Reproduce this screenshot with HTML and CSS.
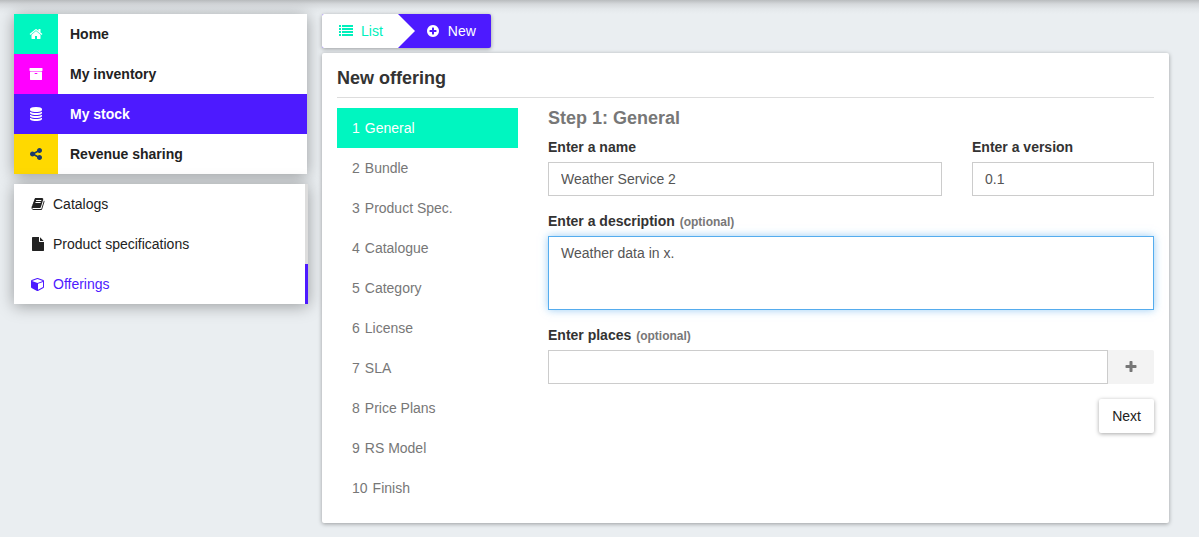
FILE: index.html
```html
<!DOCTYPE html>
<html lang="en">
<head>
<meta charset="utf-8">
<meta name="viewport" content="width=device-width, initial-scale=1">
<title>New offering</title>
<link rel="stylesheet" href="styles.css">
</head>
<body>
<div class="page">
  <aside class="sidebar">
    <nav class="menu" aria-label="Main">
      <a class="menu-item" href="#home"><span class="menu-icon teal"><svg class="icon" viewBox="0 0 1792 1792"><path d="M1472 992v480q0 26-19 45t-45 19h-384v-384h-256v384h-384q-26 0-45-19t-19-45v-480q0-1 .5-3t.5-3l575-474 575 474q1 2 1 6zm223-69l-62 74q-8 9-21 11h-3q-13 0-21-7l-692-577-692 577q-12 8-24 7-13-2-21-11l-62-74q-8-10-7-23.5t11-21.5l719-599q32-26 76-26t76 26l244 204v-195q0-14 9-23t23-9h192q14 0 23 9t9 23v408l219 182q10 8 11 21.5t-7 23.5z"/></svg></span><span class="menu-label">Home</span></a>
      <a class="menu-item" href="#inventory"><span class="menu-icon magenta"><svg class="icon" viewBox="0 0 1792 1792"><path d="M1088 832q0-26-19-45t-45-19h-256q-26 0-45 19t-19 45 19 45 45 19h256q26 0 45-19t19-45zm576-192v960q0 26-19 45t-45 19h-1408q-26 0-45-19t-19-45v-960q0-26 19-45t45-19h1408q26 0 45 19t19 45zm64-448v256q0 26-19 45t-45 19h-1536q-26 0-45-19t-19-45v-256q0-26 19-45t45-19h1536q26 0 45 19t19 45z"/></svg></span><span class="menu-label">My inventory</span></a>
      <a class="menu-item selected" href="#stock" aria-current="page"><span class="menu-icon"><svg class="icon" viewBox="0 0 1792 1792"><path d="M896 768q237 0 443-43t325-127v170q0 69-103 128t-280 93.500-385 34.500-385-34.500-280-93.500-103-128v-170q119 84 325 127t443 43zm0 768q237 0 443-43t325-127v170q0 69-103 128t-280 93.500-385 34.500-385-34.500-280-93.500-103-128v-170q119 84 325 127t443 43zm0-384q237 0 443-43t325-127v170q0 69-103 128t-280 93.500-385 34.500-385-34.500-280-93.500-103-128v-170q119 84 325 127t443 43zm0-1152q208 0 385 34.500t280 93.500 103 128v128q0 69-103 128t-280 93.500-385 34.500-385-34.500-280-93.500-103-128v-128q0-69 103-128t280-93.500 385-34.500z"/></svg></span><span class="menu-label">My stock</span></a>
      <a class="menu-item" href="#revenue"><span class="menu-icon yellow"><svg class="icon" viewBox="0 0 1792 1792"><path d="M1344 1024q133 0 226.500 93.500t93.500 226.500-93.500 226.500-226.500 93.500-226.500-93.500-93.500-226.500q0-12 2-34l-360-180q-92 86-218 86-133 0-226.500-93.500t-93.500-226.500 93.500-226.500 226.500-93.500q126 0 218 86l360-180q-2-22-2-34 0-133 93.500-226.500t226.500-93.500 226.500 93.500 93.500 226.500-93.500 226.500-226.500 93.500q-126 0-218-86l-360 180q2 22 2 34t-2 34l360 180q92-86 218-86z"/></svg></span><span class="menu-label">Revenue sharing</span></a>
    </nav>
    <nav class="submenu" aria-label="My stock">
      <a class="submenu-item" href="#catalogs"><svg class="icon" viewBox="0 0 1792 1792"><path d="M1703 478q40 57 18 129l-275 906q-19 64-76.500 107.500t-122.500 43.500h-923q-77 0-148.500-53.500t-99.500-131.500q-24-67-2-127 0-4 3-27t4-37q1-8-3-21.500t-3-19.500q2-11 8-21t16.500-23.500 16.500-23.500q23-38 45-91.500t30-91.500q3-10 .5-30t-.5-28q3-11 17-28t17-23q21-36 42-92t25-90q1-9-2.500-32t.5-28q4-13 22-30.500t22-22.500q19-26 42.500-84.500t27.500-96.500q1-8-3-25.500t-2-26.500q2-8 9-18t18-23 17-21q8-12 16.500-30.500t15-35 16-36 19.500-32 26.500-23.500 36-11.500 47.500 5.500l-1 3q38-9 51-9h761q74 0 114 56t18 130l-274 906q-36 119-71.500 153.500t-128.500 34.500h-869q-27 0-38 15-11 16-1 43 24 70 144 70h923q29 0 56-15.500t35-41.500l300-987q7-22 5-57 38 15 59 43zm-1064 2q-4 13 2 22.500t20 9.500h608q13 0 25.500-9.500t16.500-22.500l21-64q4-13-2-22.500t-20-9.500h-608q-13 0-25.500 9.500t-16.500 22.500zm-83 256q-4 13 2 22.500t20 9.500h608q13 0 25.500-9.500t16.500-22.500l21-64q4-13-2-22.500t-20-9.500h-608q-13 0-25.500 9.500t-16.500 22.500z"/></svg>Catalogs</a>
      <a class="submenu-item" href="#specs"><svg class="icon" viewBox="0 0 1792 1792"><path d="M1152 512v-472q22 14 36 28l408 408q14 14 28 36h-472zm-128 32q0 40 28 68t68 28h544v1056q0 40-28 68t-68 28h-1344q-40 0-68-28t-28-68v-1600q0-40 28-68t68-28h800v544z"/></svg>Product specifications</a>
      <a class="submenu-item selected" href="#offerings" aria-current="page"><svg class="icon" viewBox="0 0 1792 1792"><path d="M896 1629l640-349v-636l-640 233v752zm-64-865l698-254-698-254-698 254zm832-252v768q0 35-18 65t-49 47l-704 384q-28 16-61 16t-61-16l-704-384q-31-17-49-47t-18-65v-768q0-40 23-73t61-47l704-256q22-8 44-8t44 8l704 256q38 14 61 47t23 73z"/></svg>Offerings</a>
    </nav>
  </aside>

  <main class="main">
    <nav class="crumbs" aria-label="Breadcrumb">
      <a class="crumb crumb-list" href="#list"><svg class="icon" viewBox="0 0 14 14"><path d="M0 1h2v2H0zM3 1h11v2H3zM0 4h2v2H0zM3 4h11v2H3zM0 7h2v2H0zM3 7h11v2H3zM0 10h2v2H0zM3 10h11v2H3z"/></svg>List</a>
      <a class="crumb crumb-new" href="#new" aria-current="page"><svg class="icon" viewBox="0 0 1792 1792"><path d="M1344 960v-128q0-26-19-45t-45-19h-256v-256q0-26-19-45t-45-19h-128q-26 0-45 19t-19 45v256h-256q-26 0-45 19t-19 45v128q0 26 19 45t45 19h256v256q0 26 19 45t45 19h128q26 0 45-19t19-45v-256h256q26 0 45-19t19-45zm320-64q0 209-103 385.500t-279.500 279.500-385.500 103-385.500-103-279.500-279.500-103-385.500 103-385.500 279.500-279.500 385.500-103 385.500 103 279.500 279.500 103 385.500z"/></svg>New</a>
    </nav>

    <section class="panel">
      <h1 class="panel-title">New offering</h1>
      <div class="wizard">
        <nav class="steps" aria-label="Steps">
          <a class="step selected" href="#step1" aria-current="step"><span>1</span>General</a>
          <a class="step" href="#step2"><span>2</span>Bundle</a>
          <a class="step" href="#step3"><span>3</span>Product Spec.</a>
          <a class="step" href="#step4"><span>4</span>Catalogue</a>
          <a class="step" href="#step5"><span>5</span>Category</a>
          <a class="step" href="#step6"><span>6</span>License</a>
          <a class="step" href="#step7"><span>7</span>SLA</a>
          <a class="step" href="#step8"><span>8</span>Price Plans</a>
          <a class="step" href="#step9"><span>9</span>RS Model</a>
          <a class="step" href="#step10"><span>10</span>Finish</a>
        </nav>
        <form class="form">
          <h2 class="form-title">Step 1: General</h2>
          <div class="form-row">
            <div class="field">
              <label class="label" for="name">Enter a name</label>
              <input class="control" id="name" type="text" value="Weather Service 2">
            </div>
            <div class="field">
              <label class="label" for="version">Enter a version</label>
              <input class="control" id="version" type="text" value="0.1">
            </div>
          </div>
          <div class="field">
            <label class="label" for="description">Enter a description <small class="hint">(optional)</small></label>
            <textarea class="control control-area active" id="description" rows="2">Weather data in x.</textarea>
          </div>
          <div class="field">
            <label class="label" for="places">Enter places <small class="hint">(optional)</small></label>
            <div class="input-group">
              <input class="control" id="places" type="text">
              <button class="add" type="button" aria-label="Add place"><svg class="icon" viewBox="0 0 1792 1792"><path d="M1600 736v192q0 40-28 68t-68 28h-416v416q0 40-28 68t-68 28h-192q-40 0-68-28t-28-68v-416h-416q-40 0-68-28t-28-68v-192q0-40 28-68t68-28h416v-416q0-40 28-68t68-28h192q40 0 68 28t28 68v416h416q40 0 68 28t28 68z"/></svg></button>
            </div>
          </div>
          <div class="actions"><button class="next" type="button">Next</button></div>
        </form>
      </div>
    </section>
  </main>
</div>
</body>
</html>
```
FILE: styles.css
```css
* { box-sizing: border-box; }

body {
  margin: 0;
  min-height: 100vh;
  background: linear-gradient(#b9bcbe, #d5d8db 4px, #e4e8eb 9px, #eaeef1 14px) no-repeat #eaeef1;
  color: #333;
  font: 14px/20px "Liberation Sans", Arial, sans-serif;
}

a { color: inherit; text-decoration: none; }

.icon {
  flex: none;
  width: 14px;
  height: 14px;
  fill: currentColor;
}

.page {
  display: grid;
  grid-template-columns: minmax(0, 293fr) minmax(0, 847fr);
  gap: 15px;
  align-items: start;
  padding: 14px 30px 14px 14px;
}

.sidebar { display: grid; gap: 10px; }

.menu,
.submenu {
  background: #fff;
  color: #222;
  box-shadow: 0 2px 15px rgba(0, 0, 0, 0.35);
}

.menu-item { display: flex; font-weight: bold; }
.menu-icon {
  display: flex;
  align-items: center;
  justify-content: center;
  width: 44px;
  height: 40px;
  color: #fff;
}
.menu-label { padding: 10px 12px; }
.teal { background: #00f6c0; }
.magenta { background: #f0f; }
.yellow { background: #ffd900; color: #1b3a6b; }
.menu-item.selected { background: #4d1aff; color: #fff; }

.submenu { margin-right: -1px; }
.submenu-item {
  display: flex;
  align-items: center;
  gap: 8px;
  padding: 10px 17px;
  border-right: 3px solid #ddd;
}
.submenu-item.selected { border-color: #4d1aff; color: #4d1aff; }

.crumbs {
  display: flex;
  width: fit-content;
  margin-bottom: 5px;
  border-radius: 2px;
  background: #4d1aff;
  color: #fff;
  box-shadow: 0 1px 4px rgba(0, 0, 0, 0.35);
}
.crumb {
  display: flex;
  align-items: center;
  gap: 8px;
  padding: 7px 15px 7px 17px;
}
.crumb-list {
  position: relative;
  border-radius: 2px 0 0 2px;
  background: #fff;
  color: #00f0bc;
}
.crumb-list::after {
  content: "";
  position: absolute;
  top: 0;
  left: 100%;
  border: 17px solid transparent;
  border-right: 0;
  border-left-color: #fff;
}
.crumb-new { padding-left: 28px; }

.panel {
  padding: 15px;
  border-radius: 2px;
  background: #fff;
  box-shadow: 0 1px 4px rgba(0, 0, 0, 0.35);
}
.panel-title {
  margin: 0 0 10px;
  padding-bottom: 9px;
  border-bottom: 1px solid #ddd;
  font-size: 18px;
  line-height: 20px;
}

.wizard {
  display: grid;
  grid-template-columns: minmax(0, 181fr) minmax(0, 606fr);
  gap: 30px;
}
.step {
  display: flex;
  gap: 5px;
  padding: 10px 15px;
  color: #777;
}
.step.selected { background: #00f6c0; color: #fff; }

.form-title {
  margin: 0 0 9px;
  color: #777;
  font-size: 18px;
  line-height: 20px;
}
.form-row {
  display: grid;
  grid-template-columns: minmax(0, 394fr) minmax(0, 182fr);
  gap: 30px;
}
.field { margin-bottom: 15px; }
.label { display: block; margin-bottom: 5px; font-weight: bold; }
.hint { margin-left: 1px; color: #777; font-size: 12px; line-height: 12px; }

.control {
  display: block;
  width: 100%;
  height: 34px;
  padding: 6px 12px;
  border: 1px solid #ccc;
  border-radius: 0;
  outline: 0;
  background: #fff;
  color: #555;
  font: inherit;
}
.control-area { height: 74px; resize: none; }
.control.active,
.control:focus {
  border-color: #55acee;
  box-shadow: 0 0 8px rgba(85, 172, 238, 0.6);
}

.input-group { display: flex; }
.add {
  display: flex;
  flex: none;
  align-items: center;
  justify-content: center;
  width: 46px;
  border: 0;
  border-radius: 0 2px 2px 0;
  background: #f3f3f3;
  color: #777;
}

.actions { display: flex; justify-content: flex-end; }
.next {
  padding: 7px 13px;
  border: 0;
  border-radius: 2px;
  background: #fff;
  color: #222;
  font: inherit;
  box-shadow: 0 1px 4px rgba(0, 0, 0, 0.35);
}
```
